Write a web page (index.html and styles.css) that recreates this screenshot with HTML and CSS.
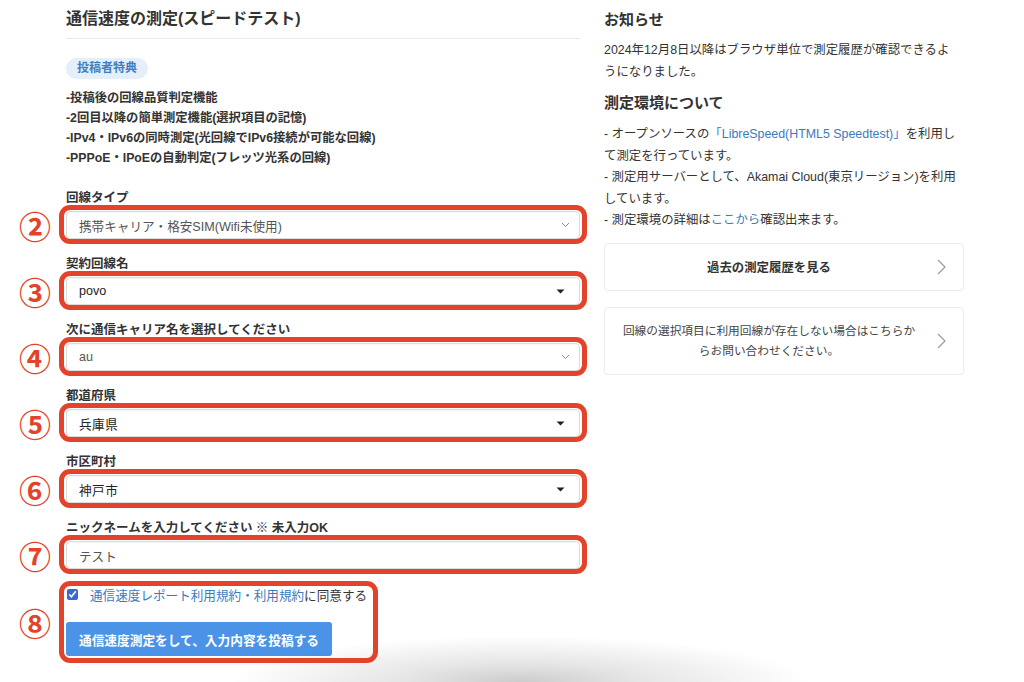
FILE: index.html
```html
<!DOCTYPE html>
<html lang="ja">
<head>
<meta charset="utf-8">
<title>通信速度の測定(スピードテスト)</title>
<link rel="stylesheet" href="styles.css">
</head>
<body>
<div class="page">
  <main class="main">
    <h1 class="title">通信速度の測定(スピードテスト)</h1>
    <span class="badge">投稿者特典</span>
    <ul class="perks">
      <li>-投稿後の回線品質判定機能</li>
      <li>-2回目以降の簡単測定機能(選択項目の記憶)</li>
      <li>-IPv4・IPv6の同時測定(光回線でIPv6接続が可能な回線)</li>
      <li>-PPPoE・IPoEの自動判定(フレッツ光系の回線)</li>
    </ul>

    <div class="field">
      <div class="label">回線タイプ</div>
      <div class="mark" data-num="②">
        <div class="control native"><span>携帯キャリア・格安SIM(Wifi未使用)</span>
          <svg class="chev" width="9" height="6" viewBox="0 0 9 6"><path d="M1 1 L4.5 4.5 L8 1" fill="none" stroke="#8a8a8a" stroke-width="1"/></svg>
        </div>
      </div>
    </div>

    <div class="field">
      <div class="label">契約回線名</div>
      <div class="mark" data-num="③">
        <div class="control fancy"><span>povo</span>
          <svg class="caret" width="9" height="5" viewBox="0 0 9 5"><path d="M0.5 0.5 H8.5 L4.5 4.5 Z" fill="#222"/></svg>
        </div>
      </div>
    </div>

    <div class="field">
      <div class="label">次に通信キャリア名を選択してください</div>
      <div class="mark" data-num="④">
        <div class="control native"><span>au</span>
          <svg class="chev" width="9" height="6" viewBox="0 0 9 6"><path d="M1 1 L4.5 4.5 L8 1" fill="none" stroke="#8a8a8a" stroke-width="1"/></svg>
        </div>
      </div>
    </div>

    <div class="field">
      <div class="label">都道府県</div>
      <div class="mark" data-num="⑤">
        <div class="control fancy"><span class="blur">兵庫県</span>
          <svg class="caret" width="9" height="5" viewBox="0 0 9 5"><path d="M0.5 0.5 H8.5 L4.5 4.5 Z" fill="#222"/></svg>
        </div>
      </div>
    </div>

    <div class="field">
      <div class="label">市区町村</div>
      <div class="mark" data-num="⑥">
        <div class="control fancy"><span class="blur">神戸市</span>
          <svg class="caret" width="9" height="5" viewBox="0 0 9 5"><path d="M0.5 0.5 H8.5 L4.5 4.5 Z" fill="#222"/></svg>
        </div>
      </div>
    </div>

    <div class="field">
      <div class="label">ニックネームを入力してください ※ 未入力OK</div>
      <div class="mark" data-num="⑦">
        <div class="control native"><span>テスト</span></div>
      </div>
    </div>

    <div class="mark agree-block" data-num="⑧">
      <label class="agree"><input type="checkbox" checked><span><a href="#">通信速度レポート利用規約・利用規約</a>に同意する</span></label>
      <button class="submit" type="button">通信速度測定をして、入力内容を投稿する</button>
    </div>
  </main>

  <aside class="side">
    <h2 class="side-title">お知らせ</h2>
    <p class="notice">2024年12月8日以降はブラウザ単位で測定履歴が確認できるようになりました。</p>
    <h2 class="side-title second">測定環境について</h2>
    <p class="env">- オープンソースの<a href="#">「LibreSpeed(HTML5 Speedtest)」</a>を利用して測定を行っています。<br>- 測定用サーバーとして、Akamai Cloud(東京リージョン)を利用しています。<br>- 測定環境の詳細は<a href="#">ここから</a>確認出来ます。</p>

    <a class="card bold" href="#">
      <span class="card-text">過去の測定履歴を見る</span>
      <svg class="card-chev" width="9" height="16" viewBox="0 0 9 16"><path d="M1 1 L8 8 L1 15" fill="none" stroke="#9a9a9a" stroke-width="1.2"/></svg>
    </a>
    <a class="card tall" href="#">
      <span class="card-text">回線の選択項目に利用回線が存在しない場合はこちらからお問い合わせください。</span>
      <svg class="card-chev" width="9" height="16" viewBox="0 0 9 16"><path d="M1 1 L8 8 L1 15" fill="none" stroke="#9a9a9a" stroke-width="1.2"/></svg>
    </a>
  </aside>
</div>
<div class="bottom-shade"></div>
</body>
</html>
```
FILE: styles.css
```css
* { box-sizing: border-box; }
html, body { margin: 0; padding: 0; background: #fff; overflow: hidden; }
body {
  font-family: "Liberation Sans", "Noto Sans CJK JP", sans-serif;
  color: #333;
  width: 1024px;
  height: 682px;
  position: relative;
}
a { color: #3a7bc0; text-decoration: none; }

.page {
  display: flex;
  gap: 24px;
  padding: 7px 0 0 66px;
}

.main { width: 514px; }

.title {
  margin: 0;
  font-size: 16px;
  line-height: 24px;
  font-weight: bold;
  color: #333;
  padding-bottom: 7px;
  border-bottom: 1px solid #e9e9e9;
}

.badge {
  display: inline-block;
  margin-top: 19px;
  height: 21px;
  line-height: 21px;
  padding: 0 11px;
  border-radius: 11px;
  background: #e4effa;
  color: #3d7fc2;
  font-size: 12px;
  font-weight: bold;
}

.perks {
  list-style: none;
  margin: 9px 0 0;
  padding: 0;
  font-size: 12.3px;
  line-height: 20px;
  font-weight: bold;
  color: #333;
}

.field { margin-top: 21px; }
.field + .field { margin-top: 16px; }

.label {
  font-size: 12.5px;
  font-weight: bold;
  line-height: 18px;
  margin-bottom: 4px;
  color: #333;
}

.mark { position: relative; }
.mark::before {
  content: "";
  position: absolute;
  inset: -6px -7px -5px -7px;
  border: 5px solid #e4432b;
  border-radius: 11px;
  pointer-events: none;
  z-index: 2;
}
.mark::after {
  content: attr(data-num);
  position: absolute;
  left: -47px;
  top: 50%;
  transform: translateY(-50%);
  font-family: "Noto Sans CJK JP", sans-serif;
  font-size: 32px;
  font-weight: bold;
  line-height: 1;
  color: #e4432b;
}

.control {
  height: 28px;
  border: 1px solid #dcdcdc;
  border-radius: 4px;
  background: #fff;
  display: flex;
  align-items: center;
  justify-content: space-between;
  padding: 0 9px 0 12px;
  font-size: 12.6px;
  box-shadow: inset 0 1px 1px rgba(0,0,0,0.04);
}
.control.native { color: #555; }
.control.fancy { color: #222; padding-right: 14px; }
.blur { letter-spacing: 0.5px; }

.agree-block {
  margin-top: 16px;
  width: 306px;
  padding-bottom: 2px;
}
.agree-block::before { inset: -4px -6px -5px -7px; }

.agree {
  display: flex;
  align-items: center;
  height: 18px;
  font-size: 12.6px;
  color: #333;
}
.agree input {
  margin: 0 12px 0 1px;
  width: 11px;
  height: 11px;
  accent-color: #3d67d0;
}

.submit {
  display: block;
  margin-top: 19px;
  height: 34px;
  width: 266px;
  border: 0;
  border-radius: 3px;
  background: #4a93e6;
  color: #fff;
  font-family: inherit;
  font-size: 12.7px;
  font-weight: bold;
  padding: 0;
}

.side { width: 360px; }
.side-title {
  margin: 0;
  font-size: 15px;
  line-height: 26px;
  font-weight: bold;
  color: #333;
}
.side-title.second { margin-top: 7px; }

.notice {
  margin: 6px 0 0;
  font-size: 12.4px;
  line-height: 22px;
  padding-right: 6px;
}
.env {
  margin: 8px 0 0;
  font-size: 12.4px;
  line-height: 21.5px;
}

.card {
  display: flex;
  align-items: center;
  border: 1px solid #ebebeb;
  border-radius: 4px;
  color: #444;
  font-size: 11.7px;
  padding: 0 17px 0 16px;
  margin-top: 11px;
  height: 48px;
}
.card.bold .card-text { font-weight: bold; color: #333; font-size: 12.4px; }
.card.tall { height: 68px; margin-top: 16px; line-height: 20px; }
.card-text { flex: 1; text-align: center; padding-right: 20px; }
.card-chev { flex: none; }

.bottom-shade {
  position: absolute;
  left: 230px;
  top: 636px;
  width: 580px;
  height: 46px;
  background: radial-gradient(ellipse 50% 100% at 50% 100%, rgba(0,0,0,0.2) 0%, rgba(0,0,0,0.1) 40%, rgba(0,0,0,0) 100%);
  pointer-events: none;
}
```
